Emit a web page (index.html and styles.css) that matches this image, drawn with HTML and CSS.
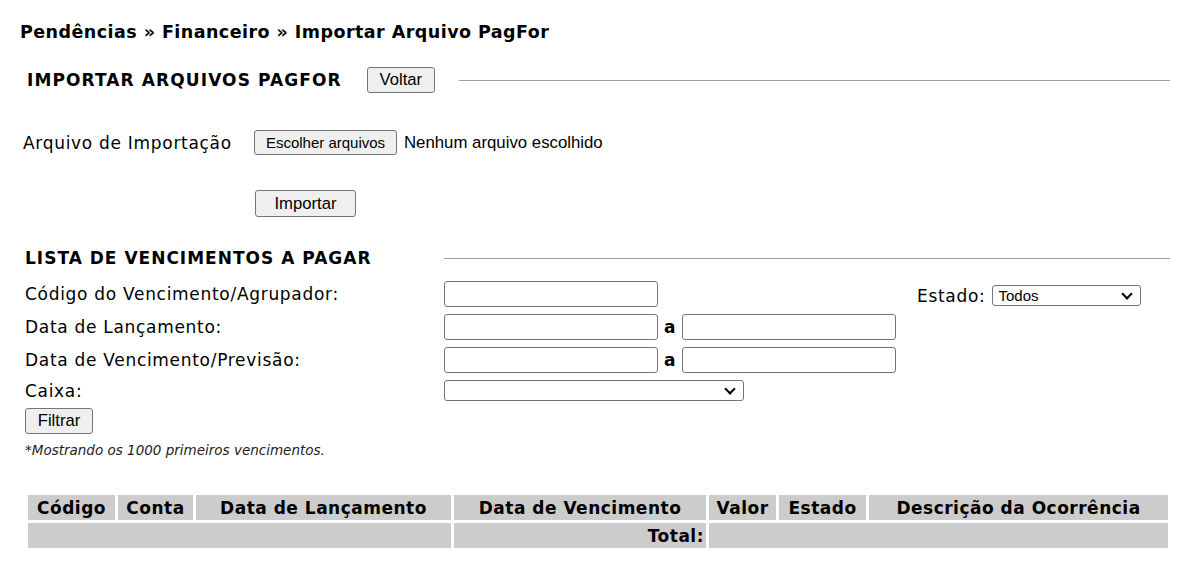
FILE: index.html
```html
<!doctype html>
<html lang="pt-BR">
<head>
    <meta charset="UTF-8">
    <title>Importar Arquivo PagFor</title>
    <link rel="stylesheet" href="styles.css">
</head>
<body>
    <div class="page">
        <h1 class="crumb">Pendências » Financeiro » Importar Arquivo PagFor</h1>

<!--    importar    -->
        <div class="sec-head">
            <h2>IMPORTAR ARQUIVOS PAGFOR</h2>
            <button class="btn btn-voltar">Voltar</button>
            <div class="sec-line"></div>
        </div>

        <div class="import-row">
            <span class="import-label">Arquivo de Importação</span>
            <span class="btn btn-file">Escolher arquivos</span>
            <span class="file-name">Nenhum arquivo escolhido</span>
        </div>

        <div class="import-send">
            <button class="btn btn-importar">Importar</button>
        </div>

<!--    lista    -->
        <div class="sec-head sec-lista">
            <h2>LISTA DE VENCIMENTOS A PAGAR</h2>
            <div class="sec-line"></div>
        </div>

        <div class="filter">
            <div class="f-row">
                <span class="f-label">Código do Vencimento/Agrupador:</span>
                <span class="inp"></span>
                <span class="estado">
                    <span class="estado-label">Estado:</span>
                    <span class="sel sel-estado">Todos<span class="caret"></span></span>
                </span>
            </div>
            <div class="f-row">
                <span class="f-label">Data de Lançamento:</span>
                <span class="inp"></span>
                <span class="ate">a</span>
                <span class="inp"></span>
            </div>
            <div class="f-row">
                <span class="f-label">Data de Vencimento/Previsão:</span>
                <span class="inp"></span>
                <span class="ate">a</span>
                <span class="inp"></span>
            </div>
            <div class="f-row f-caixa">
                <span class="f-label">Caixa:</span>
                <span class="sel sel-caixa"><span class="caret"></span></span>
            </div>
            <button class="btn btn-filtrar">Filtrar</button>
            <p class="note">*Mostrando os 1000 primeiros vencimentos.</p>
        </div>

        <table class="venc">
            <colgroup>
                <col class="c-cod">
                <col class="c-conta">
                <col class="c-lanc">
                <col class="c-venc">
                <col class="c-valor">
                <col class="c-estado">
                <col class="c-desc">
            </colgroup>
            <tr>
                <th>Código</th>
                <th>Conta</th>
                <th>Data de Lançamento</th>
                <th>Data de Vencimento</th>
                <th>Valor</th>
                <th>Estado</th>
                <th>Descrição da Ocorrência</th>
            </tr>
            <tr class="total">
                <td colspan="3"></td>
                <td class="total-label">Total:</td>
                <td colspan="3"></td>
            </tr>
        </table>
    </div>
</body>
</html>
```

FILE: styles.css
```css
* {
    margin: 0;
    padding: 0;
    box-sizing: border-box;
}
body {
    font-family: "DejaVu Sans", Verdana, sans-serif;
    font-size: 17px;
    letter-spacing: 0.7px;
    color: #000;
    background: #fff;
}
.page {
    padding: 22px 17px 0 0;
}

/*crumb*/
.crumb {
    margin-left: 20px;
    font-size: 17.5px;
    letter-spacing: 0.45px;
    line-height: 20px;
    font-weight: bold;
}

/*section head*/
.sec-head {
    display: flex;
    align-items: center;
    height: 26px;
    margin-top: 25px;
    padding-left: 27px;
}
.sec-head h2 {
    font-size: 17px;
    letter-spacing: 1.1px;
    font-weight: bold;
    white-space: nowrap;
}
.sec-line {
    flex: 1;
    height: 1px;
    background: #a0a0a0;
}
.btn {
    display: inline-flex;
    align-items: center;
    justify-content: center;
    height: 26px;
    font-family: "Liberation Sans", Arial, sans-serif;
    font-size: 16.67px;
    letter-spacing: 0;
    color: #000;
    background: #efefef;
    border: 1px solid #767676;
    border-radius: 3px;
}
.btn-voltar {
    width: 68px;
    margin-left: 25px;
}
.sec-head .btn-voltar + .sec-line {
    margin-left: 24px;
}

/*import*/
.import-row {
    display: flex;
    align-items: center;
    height: 25px;
    margin-top: 37px;
    padding-left: 23px;
}
.import-label {
    width: 231px;
}
.btn-file {
    width: 143px;
    height: 25px;
    font-size: 15px;
}
.file-name {
    margin-left: 7px;
    font-family: "Liberation Sans", Arial, sans-serif;
    font-size: 16.8px;
    letter-spacing: 0;
}
.import-send {
    margin-top: 35px;
    padding-left: 255px;
}
.btn-importar {
    width: 101px;
    height: 27px;
}

/*lista*/
.sec-lista {
    margin-top: 28px;
    padding-left: 25px;
}
.sec-lista h2 {
    width: 419px;
    letter-spacing: 1px;
}

.filter {
    margin-top: 10px;
    padding-left: 25px;
}
.f-row {
    display: flex;
    align-items: center;
    height: 26px;
    margin-bottom: 7px;
}
.f-label {
    width: 419px;
}
.inp {
    width: 214px;
    height: 26px;
    border: 1px solid #767676;
    border-radius: 3px;
}
.ate {
    width: 24px;
    text-align: center;
    font-weight: bold;
}
.estado {
    display: flex;
    align-items: center;
    margin-left: 259px;
    padding-top: 3px;
}
.estado-label {
    margin-right: 6px;
}
.sel {
    position: relative;
    display: flex;
    align-items: center;
    height: 21px;
    padding-left: 6px;
    font-family: "Liberation Sans", Arial, sans-serif;
    font-size: 15px;
    letter-spacing: 0;
    border: 1px solid #767676;
    border-radius: 3px;
}
.sel-estado {
    width: 149px;
}
.sel-caixa {
    width: 300px;
}
.caret {
    position: absolute;
    top: 4px;
    right: 9px;
    width: 8px;
    height: 8px;
    border-right: 2px solid #000;
    border-bottom: 2px solid #000;
    transform: rotate(45deg);
}
.f-caixa {
    height: 21px;
    margin-bottom: 7px;
}
.btn-filtrar {
    width: 68px;
}
.note {
    margin-top: 8px;
    font-size: 13.5px;
    letter-spacing: 0;
    font-style: italic;
    color: #222;
}

/*table*/
.venc {
    margin: 34px 0 0 25px;
    border-spacing: 3px;
    table-layout: fixed;
    width: 1144px;
}
.c-cod { width: 87px; }
.c-conta { width: 75px; }
.c-lanc { width: 255px; }
.c-venc { width: 252px; }
.c-valor { width: 67px; }
.c-estado { width: 87px; }
.c-desc { width: 299px; }
.venc th,
.venc td {
    height: 25px;
    background: #ccc;
    font-size: 17px;
    letter-spacing: 0.5px;
    font-weight: bold;
    white-space: nowrap;
}
.venc th {
    text-align: center;
}
.venc .total-label {
    text-align: right;
    padding-right: 2px;
}
```
